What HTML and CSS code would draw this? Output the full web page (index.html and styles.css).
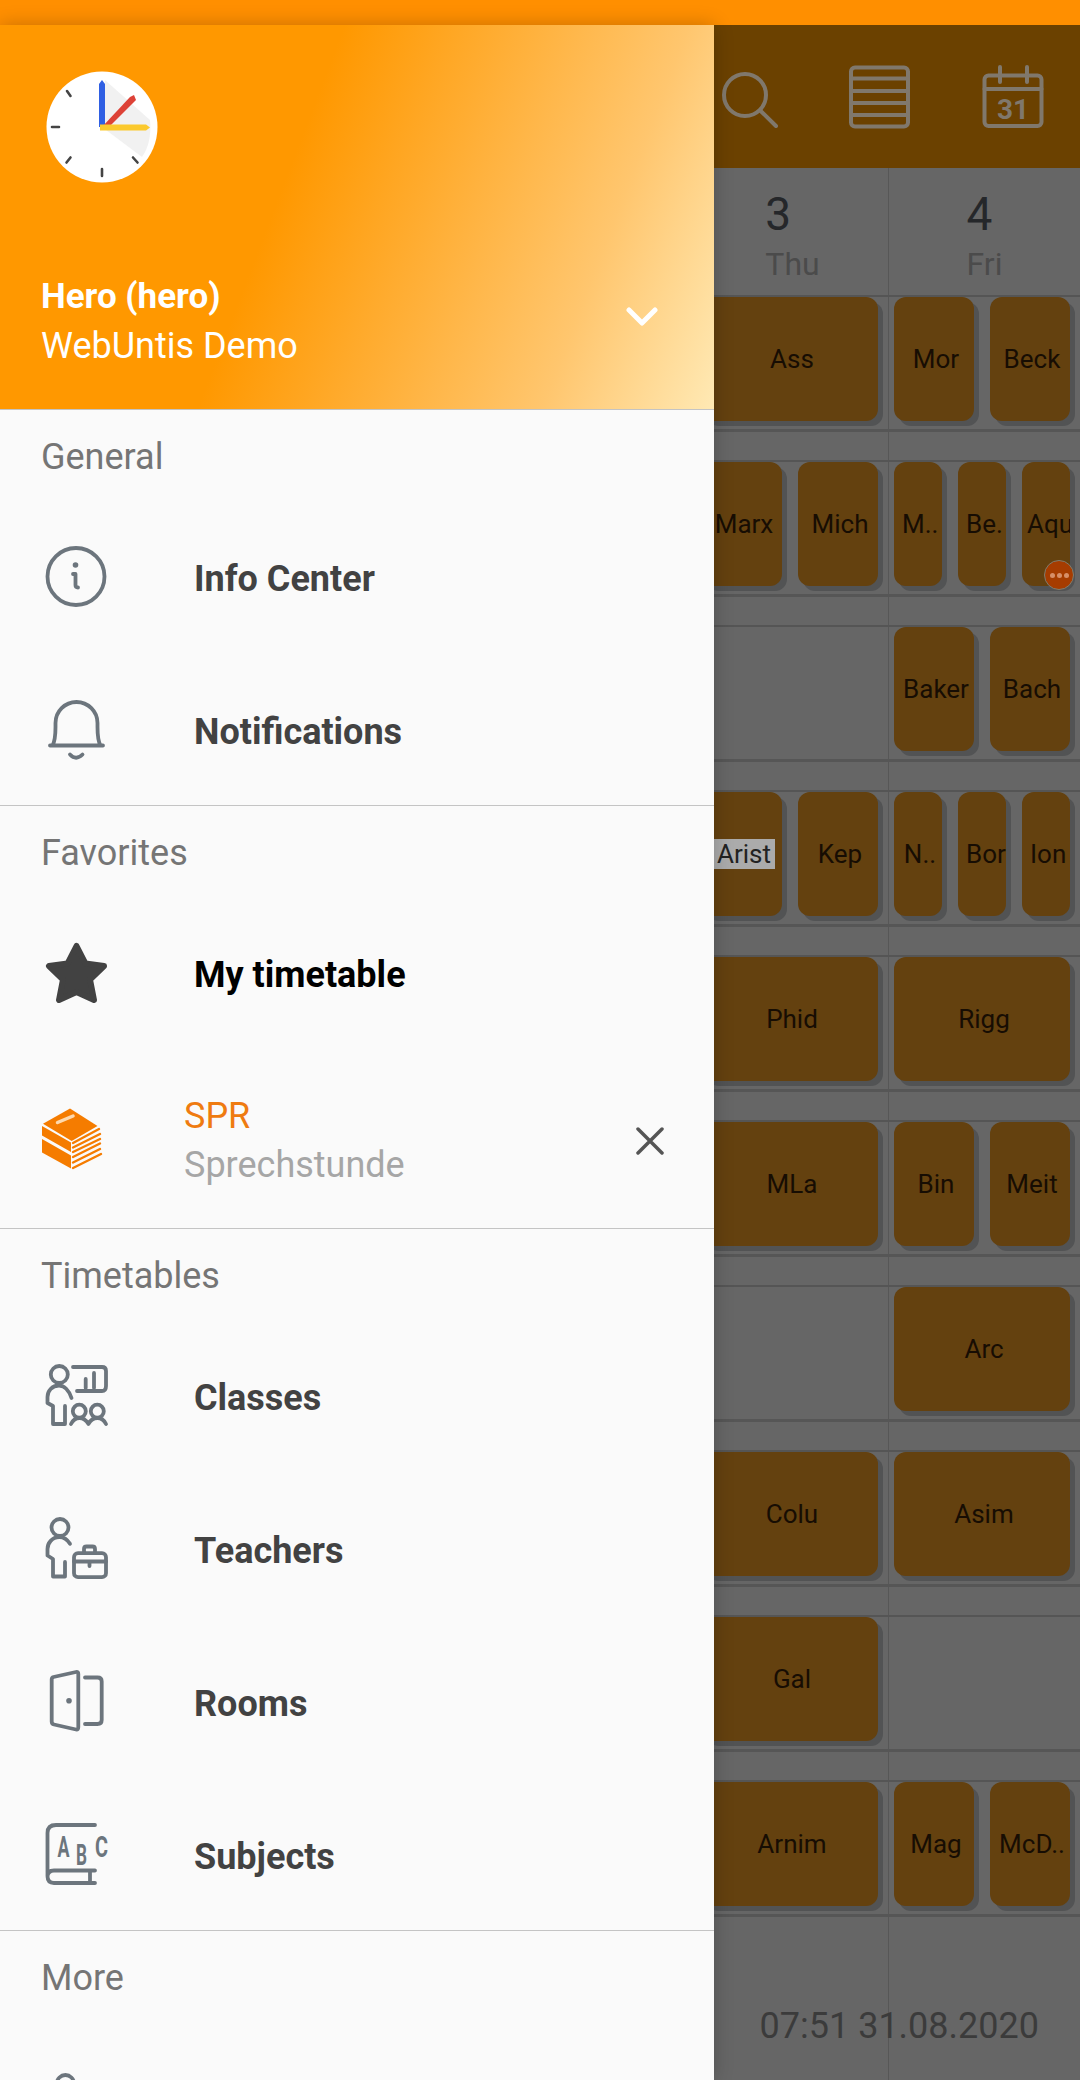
FILE: index.html
```html
<!DOCTYPE html>
<html lang="en">
<head>
<meta charset="utf-8">
<title>WebUntis</title>
<link rel="stylesheet" href="styles.css">
</head>
<body>
<div class="app">
  <div class="statusbar"></div>

  <main class="screen">
    <header class="appbar">
      <svg class="bar-icon" width="60" height="64" viewBox="0 0 60 64"><circle cx="24" cy="30" r="21"/><path d="M39.7 46 55 61"/></svg>
      <svg class="bar-icon" width="62" height="64" viewBox="0 0 62 64"><rect x="2" y="2.5" width="57" height="59" rx="4"/><path d="M2 13.5H59M2 26H59M2 38H59M2 50H59"/></svg>
      <svg class="bar-icon" width="62" height="64" viewBox="0 0 62 64"><rect x="2.5" y="10.5" width="57" height="50.5" rx="4"/><path d="M2.5 24H59.5M18 2V17M45 2V17"/><text class="cal-num" x="31" y="54" text-anchor="middle">31</text></svg>
    </header>

    <div class="timetable">
      <div class="days">
        <div class="day"><div class="day-in"><span class="day-num">3</span><span class="day-name">Thu</span></div></div>
        <div class="day"><div class="day-in"><span class="day-num">4</span><span class="day-name">Fri</span></div></div>
      </div>

      <div class="row"><div class="cols">
        <div class="cell"><div class="lesson"><span>Ass</span></div></div>
        <div class="cell"><div class="lesson"><span>Mor</span></div><div class="lesson"><span>Beck</span></div></div>
      </div></div>

      <div class="row"><div class="cols">
        <div class="cell"><div class="lesson"><span>Marx</span></div><div class="lesson"><span>Mich</span></div></div>
        <div class="cell"><div class="lesson"><span>M..</span></div><div class="lesson"><span>Be.</span></div><div class="lesson lesson-tight"><span>Aqu</span><i class="more"><b></b><b></b><b></b></i></div></div>
      </div></div>

      <div class="row"><div class="cols">
        <div class="cell"></div>
        <div class="cell"><div class="lesson"><span>Baker</span></div><div class="lesson"><span>Bach</span></div></div>
      </div></div>

      <div class="row"><div class="cols">
        <div class="cell"><div class="lesson"><span><mark class="mark">Arist</mark></span></div><div class="lesson"><span>Kep</span></div></div>
        <div class="cell"><div class="lesson"><span>N..</span></div><div class="lesson"><span>Bor</span></div><div class="lesson"><span>Ion</span></div></div>
      </div></div>

      <div class="row"><div class="cols">
        <div class="cell"><div class="lesson"><span>Phid</span></div></div>
        <div class="cell"><div class="lesson"><span>Rigg</span></div></div>
      </div></div>

      <div class="row"><div class="cols">
        <div class="cell"><div class="lesson"><span>MLa</span></div></div>
        <div class="cell"><div class="lesson"><span>Bin</span></div><div class="lesson"><span>Meit</span></div></div>
      </div></div>

      <div class="row"><div class="cols">
        <div class="cell"></div>
        <div class="cell"><div class="lesson"><span>Arc</span></div></div>
      </div></div>

      <div class="row"><div class="cols">
        <div class="cell"><div class="lesson"><span>Colu</span></div></div>
        <div class="cell"><div class="lesson"><span>Asim</span></div></div>
      </div></div>

      <div class="row"><div class="cols">
        <div class="cell"><div class="lesson"><span>Gal</span></div></div>
        <div class="cell"></div>
      </div></div>

      <div class="row"><div class="cols">
        <div class="cell"><div class="lesson"><span>Arnim</span></div></div>
        <div class="cell"><div class="lesson"><span>Mag</span></div><div class="lesson"><span>McD..</span></div></div>
      </div></div>

      <div class="stamp">07:51 31.08.2020</div>
    </div>
  </main>

  <aside class="drawer">
    <section class="profile">
      <svg class="clock" width="112" height="112" viewBox="0 0 112 112">
        <circle class="clock-face" cx="56" cy="56" r="55.5"/>
        <path class="clock-shade" d="M59 9 L104 49 Q106 72 96 86 L56 56Z"/>
        <g class="clock-ticks">
          <path d="M6 56H13M56 98V105M21 20 24.5 25M20.500 91.500 24.500 86.500M91.500 91.500 87 86.500"/>
        </g>
        <path class="hand-fill hand-blue" d="M53 56V13L56 9 59 13V56Z"/>
        <path class="hand-fill hand-red" d="M56 56 84 26 88 24 90 29 61 58Z"/>
        <path class="hand-fill hand-yellow" d="M54 53.500H100L104 56.500 100 59.500H54Z"/>
      </svg>
      <div class="profile-row">
        <div>
          <div class="profile-name">Hero (hero)</div>
          <div class="profile-school">WebUntis Demo</div>
        </div>
        <svg class="chevron" width="32" height="20" viewBox="0 0 32 20"><path d="M3 3 16 16 29 3"/></svg>
      </div>
    </section>

    <section class="group">
      <h2 class="group-title">General</h2>
      <div class="item">
        <svg class="ico" width="66" height="66" viewBox="0 0 66 66"><circle cx="33" cy="30.500" r="28.500"/><path d="M30 28H32.500V39Q32.500 41.500 35 41.500"/><circle class="ico-dot" cx="32.500" cy="19" r="2.800"/></svg>
        <span class="item-label">Info Center</span>
      </div>
      <div class="item">
        <svg class="ico" width="66" height="66" viewBox="0 0 66 66"><path d="M7 46.500H60M9.500 46.500C12 42 12.500 38 12.500 28V24A21 21 0 0 1 54.500 24V28C54.500 38 55 42 57.500 46.500M27 55.500Q33 62 39.500 55.500"/></svg>
        <span class="item-label">Notifications</span>
      </div>
    </section>

    <section class="group">
      <h2 class="group-title">Favorites</h2>
      <div class="item">
        <svg class="star" width="66" height="66" viewBox="0 0 66 66"><path d="M33.500 4 42.500 21.500 61 24 47 37.500 51 58 33.500 50 16 58 20 37.500 6 24 24.500 21.500Z"/></svg>
        <span class="item-label item-label-strong">My timetable</span>
      </div>
      <div class="item item-fav">
        <svg class="books" width="66" height="66" viewBox="0 0 66 66">
          <path class="books-fill" d="M27 .5 54.500 18 28.700 33 0 15.700Z"/>
          <path class="books-fill" d="M-1 18 28 34.500V44L-1 27.500ZM-1 31 28 47.500V60.500L-1 44.500Z"/>
          <path class="books-gap" d="M14.500 14.500 30 8"/>
          <path class="books-line" d="M30 35 56 21M30 39.500 57 26M30 44 57 31M30 49 57 35.500M30 54.500 57 41M30 60 58 46"/>
        </svg>
        <div class="fav-text">
          <div class="fav-code">SPR</div>
          <div class="fav-name">Sprechstunde</div>
        </div>
        <svg class="close" width="28" height="28" viewBox="0 0 28 28"><path d="M2 2 26 26M26 2 2 26"/></svg>
      </div>
    </section>

    <section class="group">
      <h2 class="group-title">Timetables</h2>
      <div class="item">
        <svg class="ico" width="66" height="66" viewBox="0 0 66 66"><circle cx="16.300" cy="9.500" r="8.500"/><path d="M28.500 33C26 25 21 20.500 16 20.500 9 20.500 4.500 26 4.500 32V38L10 41V59H22V41M30 2H59Q63 2 63 6V21Q63 26 59 26H34M42.700 14V23M51 8V23"/><circle cx="36.300" cy="46.200" r="6.500"/><circle cx="54.300" cy="46.200" r="6.500"/><path d="M28 59C30 55 33 53 36.500 53 40 53 43 55 45.500 59 47.500 55 51 53 54.500 53 58 53 61 55 63 59"/></svg>
        <span class="item-label">Classes</span>
      </div>
      <div class="item">
        <svg class="ico" width="66" height="66" viewBox="0 0 66 66"><circle cx="17" cy="9.500" r="8.500"/><path d="M27 25.800C24 21 20 19.200 16.300 19.200 9 19.200 4.500 25 4.500 31V37.500L10 41V58.500H22V44"/><rect x="31" y="35.200" width="32" height="24" rx="4"/><path d="M41 35V31Q41 28.500 43.500 28.500H49.500Q52 28.500 52 31V35M31 43.500H63M46.500 43.500V48"/></svg>
        <span class="item-label">Teachers</span>
      </div>
      <div class="item">
        <svg class="ico" width="66" height="66" viewBox="0 0 66 66"><path d="M8.700 8.500Q8.700 6.500 10.500 6L33 1Q35.300.5 35.300 3V56Q35.300 59 33 58.500L11 53.500Q8.700 53 8.700 50.500ZM42 6.500H54.500Q58.700 6.500 58.700 10.500V49Q58.700 53 54.500 53H42"/><circle class="ico-dot" cx="26" cy="29.800" r="2.800"/></svg>
        <span class="item-label">Rooms</span>
      </div>
      <div class="item">
        <svg class="ico" width="66" height="66" viewBox="0 0 66 66"><path d="M52 1H13Q4.500 1 4.500 9V52Q4.500 59 11 59H52M52 46.500H11Q4.500 46.500 4.500 53M47 46.500V59"/><text class="abc" x="14.500" y="33" textLength="12" lengthAdjust="spacingAndGlyphs">A</text><text class="abc" x="33" y="40.500" textLength="11" lengthAdjust="spacingAndGlyphs">B</text><text class="abc" x="52" y="33" textLength="13" lengthAdjust="spacingAndGlyphs">C</text></svg>
        <span class="item-label">Subjects</span>
      </div>
    </section>

    <section class="group group-last">
      <h2 class="group-title">More</h2>
      <div class="item">
        <svg class="ico" width="66" height="66" viewBox="0 0 66 66"><circle cx="22.400" cy="16.500" r="8.500"/></svg>
      </div>
    </section>
  </aside>
</div>
</body>
</html>
```

FILE: styles.css
```css
* { box-sizing: border-box; }
html, body { margin: 0; padding: 0; }
body { font-family: Roboto, "Noto Sans", sans-serif; background: #666; }

.app {
  position: relative;
  width: 1080px;
  height: 2080px;
  overflow: hidden;
  display: flex;
  flex-direction: column;
  background: #666;
}
.statusbar { height: 25px; flex: none; background: #ff8f00; }
.screen { flex: 1; display: flex; flex-direction: column; min-height: 0; }

/* App bar behind the drawer */
.appbar {
  height: 143px;
  flex: none;
  display: flex;
  align-items: center;
  justify-content: flex-end;
  gap: 68px;
  padding-right: 36px;
  background: #6b4100;
}
.bar-icon { fill: none; stroke: #80786c; stroke-width: 4; stroke-linecap: round; stroke-linejoin: round; }
.bar-icon:last-child { margin-left: 3px; }
.cal-num { fill: #80786c; stroke: none; font: 700 28px Roboto, sans-serif; }

/* Timetable */
.timetable {
  flex: 1;
  display: flex;
  flex-direction: column;
  margin-left: 696px;
  background: linear-gradient(#575757, #575757) 192px 0 / 1px 100% no-repeat;
}
.days { height: 127px; flex: none; display: grid; grid-template-columns: 192px 192px; }
.day { display: flex; justify-content: center; align-items: flex-start; padding-top: 17px; }
.day-in { display: flex; flex-direction: column; align-items: flex-start; }
.day-num { font-size: 46px; line-height: 58px; color: #25272a; padding-left: 1px; }
.day-name { font-size: 32px; line-height: 42px; color: #4b4b4b; padding-left: 1px; }

.row { height: 165px; flex: none; border-top: 2px solid #555; }
.cols {
  height: 135px;
  display: grid;
  grid-template-columns: 192px 192px;
  border-bottom: 3px solid #565656;
}
.cell { display: flex; gap: 16px; padding: 0 10px 8px 6px; min-width: 0; }
.lesson {
  position: relative;
  flex: 1 1 0;
  min-width: 0;
  height: 124px;
  display: flex;
  align-items: center;
  border-radius: 12px;
  background: #64410f;
  box-shadow: 5px 5px 0 #525354;
  font-size: 26px;
  color: #170d03;
}
.lesson > span {
  display: block;
  width: 100%;
  padding: 0 4px 0 8px;
  overflow: hidden;
  white-space: nowrap;
  text-align: center;
}
.lesson-tight > span { padding: 0 5px; }
.mark { padding: 2px 4px; background: #ababab; color: #222; }
.more {
  position: absolute;
  right: -4px;
  bottom: -4px;
  width: 30px;
  height: 30px;
  display: flex;
  align-items: center;
  justify-content: center;
  gap: 2px;
  border-radius: 50%;
  border: 1px solid #7d7d70;
  background: #a63c00;
}
.more b { width: 5px; height: 5px; border-radius: 50%; background: #d68f68; }

.stamp {
  flex: 1;
  display: flex;
  justify-content: flex-end;
  margin-right: 41px;
  padding-top: 59px;
  font-size: 36px;
  line-height: 44px;
  color: #3b3b3b;
}

/* Drawer over the page */
.drawer {
  position: absolute;
  left: 0;
  top: 25px;
  bottom: 0;
  width: 714px;
  overflow: hidden;
  background: #fafafa;
  box-shadow: 0 0 18px rgba(0, 0, 0, .22);
}
.profile {
  height: 384px;
  display: flex;
  flex-direction: column;
  padding: 46px 0 0 46px;
  background: linear-gradient(111deg, #ff9800 40%, #ffc66e 80%, #ffe9b4 100%);
  color: #fff;
}
.clock { flex: none; display: block; }
.clock-face { fill: #fff; }
.clock-shade { fill: #ececec; opacity: .75; }
.clock-ticks { fill: none; stroke: #444; stroke-width: 2.600; stroke-linecap: round; }
.hand-fill { stroke: none; }
.hand-blue { fill: #2f5fe3; }
.hand-red { fill: #dd4237; }
.hand-yellow { fill: #fbc92d; }

.profile-row {
  display: flex;
  align-items: center;
  justify-content: space-between;
  margin: 90px 56px 0 -5px;
}
.profile-name { font-size: 35px; line-height: 48px; font-weight: 700; }
.profile-school { font-size: 36px; line-height: 50px; }
.chevron { fill: none; stroke: #fff; stroke-width: 5; stroke-linecap: round; stroke-linejoin: round; margin-bottom: 10px; }

.group { border-top: 1.500px solid #c4c4c4; margin-bottom: -3.500px; position: relative; }
.group-title {
  height: 92.500px;
  margin: 0;
  padding: 24px 0 0 41px;
  font-size: 36px;
  line-height: 46px;
  font-weight: 400;
  color: #757575;
}
.item {
  height: 153px;
  display: flex;
  align-items: center;
  padding-left: 43px;
}
.item-fav { height: 179.500px; }
.ico { flex: none; overflow: visible; fill: none; stroke: #6c757d; stroke-width: 3.800; stroke-linecap: round; stroke-linejoin: round; }
.ico-dot { fill: #6c757d; stroke: none; }
.abc { fill: #6c757d; stroke: none; font: 700 30px Roboto, sans-serif; }
.star { flex: none; fill: #424242; stroke: #424242; stroke-width: 6; stroke-linejoin: round; }
.books { flex: none; overflow: visible; }
.books-fill { fill: #f57c00; }
.books-gap { fill: none; stroke: #fdd9ae; stroke-width: 3.500; stroke-linecap: round; }
.books-line { fill: none; stroke: #f57c00; stroke-width: 2.400; stroke-linecap: round; }
.item-label { margin-left: 85px; font-size: 36px; font-weight: 700; color: #424242; }
.item-label-strong { color: #000; }
.fav-text { margin-left: 75px; flex: 1; }
.fav-code { font-size: 36px; line-height: 49px; color: #ef7b10; }
.fav-name { font-size: 36px; line-height: 49px; color: #a6a6a6; }
.close { flex: none; margin-right: 50px; fill: none; stroke: #555; stroke-width: 3.500; stroke-linecap: round; }
```
